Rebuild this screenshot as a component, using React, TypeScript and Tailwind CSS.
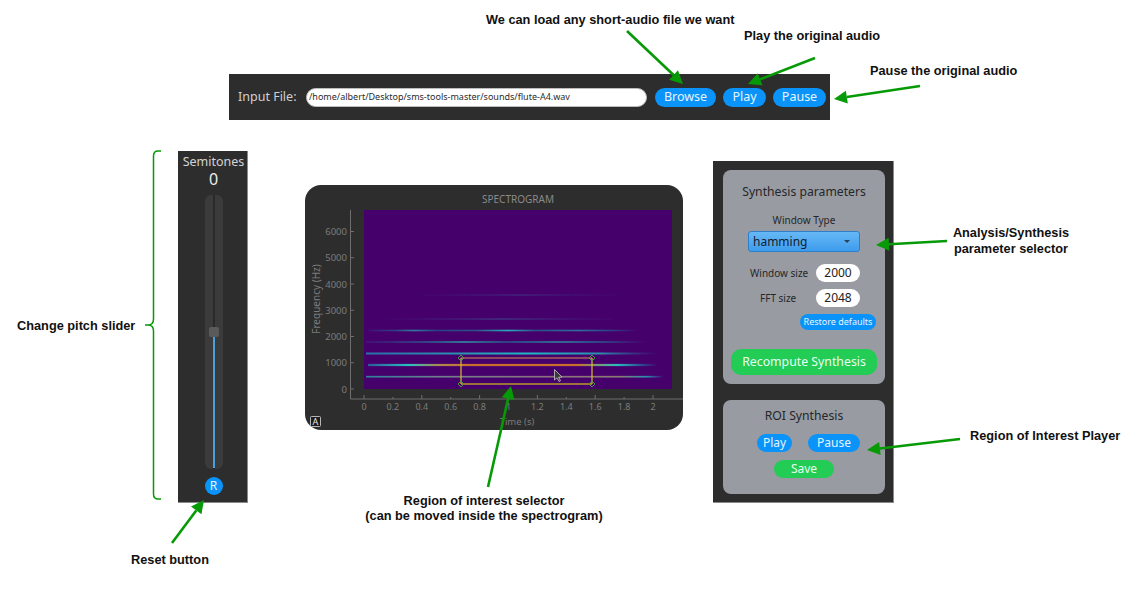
import React from 'react';

const uiFont = "font-['Noto_Sans',sans-serif]";

const arrows = [
  { x1: 627, y1: 31, x2: 683, y2: 84 },
  { x1: 815, y1: 58, x2: 748, y2: 84 },
  { x1: 920, y1: 86, x2: 834, y2: 99 },
  { x1: 947, y1: 241, x2: 876, y2: 245 },
  { x1: 960, y1: 439, x2: 867, y2: 450 },
  { x1: 488, y1: 487, x2: 511, y2: 386 },
  { x1: 172, y1: 543, x2: 204, y2: 500 },
];

// harmonics of the flute note: y position, x range and a gradient
const harmonics = [
  { y: 295, x: 400, w: 240, h: 0.7, fill: 'url(#hFaint)' },
  { y: 319, x: 372, w: 260, h: 1, fill: 'url(#hFaint)' },
  { y: 330.5, x: 368, w: 270, h: 1.6, fill: 'url(#hMid)' },
  { y: 342, x: 366, w: 280, h: 1.6, fill: 'url(#hMid2)' },
  { y: 353.5, x: 366, w: 292, h: 2, fill: 'url(#hBright)' },
  { y: 365, x: 368, w: 290, h: 2.2, fill: 'url(#hHot)' },
  { y: 376.7, x: 366, w: 298, h: 1.7, fill: 'url(#hLow)' },
];

const Arrow = ({ x1, y1, x2, y2 }: { x1: number; y1: number; x2: number; y2: number }) => {
  const a = Math.atan2(y2 - y1, x2 - x1);
  const len = 13;
  const wing = 6.5;
  const bx = x2 - len * Math.cos(a);
  const by = y2 - len * Math.sin(a);
  const px = -Math.sin(a) * wing;
  const py = Math.cos(a) * wing;
  return (
    <g>
      <line x1={x1} y1={y1} x2={bx} y2={by} stroke="#079a07" strokeWidth={2.6} />
      <polygon points={`${x2},${y2} ${bx + px},${by + py} ${bx - px},${by - py}`} fill="#079a07" />
    </g>
  );
};

const Overlay = () => (
  <svg className="absolute left-0 top-0 z-10 pointer-events-none" width={1139} height={595}>
    {arrows.map((a, i) => (
      <Arrow key={i} {...a} />
    ))}
    <path
      d="M161 151 H158 Q153.5 151 153.5 156 V319 Q153.5 325 148 325 H145 M148 325 Q153.5 325 153.5 331 V494 Q153.5 499 158 499 H161"
      fill="none"
      stroke="#079a07"
      strokeWidth={1.5}
    />
  </svg>
);

const Spectrogram = () => {
  const xTicks = ['0', '0.2', '0.4', '0.6', '0.8', '1', '1.2', '1.4', '1.6', '1.8', '2'];
  const yTicks = ['0', '1000', '2000', '3000', '4000', '5000', '6000'];
  return (
    <div className={`absolute left-[305px] top-[185px] h-[245px] w-[378px] overflow-hidden rounded-[16px] bg-[#2d2d2d] ${uiFont}`}>
      <svg width={378} height={245} viewBox="305 185 378 245">
        <defs>
          <filter id="soft" x="-5%" y="-300%" width="110%" height="700%">
            <feGaussianBlur stdDeviation="0.5" />
          </filter>
          <linearGradient id="hFaint">
            <stop offset="0" stopColor="#3f2a80" stopOpacity={0} />
            <stop offset="0.5" stopColor="#3a4a8c" />
            <stop offset="1" stopColor="#3f2a80" stopOpacity={0} />
          </linearGradient>
          <linearGradient id="hMid">
            <stop offset="0" stopColor="#31488e" stopOpacity={0.2} />
            <stop offset="0.1" stopColor="#2b3f85" />
            <stop offset="0.17" stopColor="#2f7f9e" />
            <stop offset="0.25" stopColor="#2b3f85" />
            <stop offset="0.4" stopColor="#2b4f8a" />
            <stop offset="0.52" stopColor="#26b0b8" />
            <stop offset="0.62" stopColor="#2b4f8a" />
            <stop offset="0.78" stopColor="#2f6f9e" />
            <stop offset="0.9" stopColor="#2b3f85" />
            <stop offset="1" stopColor="#31488e" stopOpacity={0} />
          </linearGradient>
          <linearGradient id="hMid2">
            <stop offset="0" stopColor="#31488e" stopOpacity={0.3} />
            <stop offset="0.25" stopColor="#2b5f90" />
            <stop offset="0.35" stopColor="#2f8fa0" />
            <stop offset="0.5" stopColor="#2b4f8a" />
            <stop offset="0.7" stopColor="#2f7f9e" />
            <stop offset="0.85" stopColor="#2b4f8a" />
            <stop offset="1" stopColor="#31488e" stopOpacity={0} />
          </linearGradient>
          <linearGradient id="hBright">
            <stop offset="0" stopColor="#2a6fa8" />
            <stop offset="0.3" stopColor="#2a8fae" />
            <stop offset="0.55" stopColor="#22b8c4" />
            <stop offset="0.8" stopColor="#2a8fae" />
            <stop offset="1" stopColor="#2a5f98" stopOpacity={0} />
          </linearGradient>
          <linearGradient id="hHot">
            <stop offset="0" stopColor="#2a5c9a" />
            <stop offset="0.14" stopColor="#28c0c0" />
            <stop offset="0.24" stopColor="#a88a50" />
            <stop offset="0.35" stopColor="#c8702a" />
            <stop offset="0.72" stopColor="#c8702a" />
            <stop offset="0.86" stopColor="#28c0c0" />
            <stop offset="0.93" stopColor="#2a5c9a" />
            <stop offset="1" stopColor="#2a5c9a" stopOpacity={0} />
          </linearGradient>
          <linearGradient id="hLow">
            <stop offset="0" stopColor="#2f7f9a" />
            <stop offset="0.25" stopColor="#6f7f8a" />
            <stop offset="0.6" stopColor="#8a7080" />
            <stop offset="0.85" stopColor="#8a7a70" />
            <stop offset="0.94" stopColor="#2890b0" />
            <stop offset="1" stopColor="#28a0b0" stopOpacity={0} />
          </linearGradient>
        </defs>
        <rect x={364} y={210} width={308} height={179} fill="#46006c" />
        <g filter="url(#soft)">
          {harmonics.map((h) => (
            <rect key={h.y} x={h.x} y={h.y - h.h / 2} width={h.w} height={h.h} fill={h.fill} />
          ))}
        </g>

        <path d="M350.5 210 V399 H683" fill="none" stroke="#6f6f6f" strokeWidth={1} />
        {xTicks.map((t, i) => (
          <g key={t}>
            <line x1={364 + i * 28.9} x2={364 + i * 28.9} y1={399} y2={i % 2 === 0 ? 395 : 397} stroke="#6f6f6f" />
            <text x={364 + i * 28.9} y={410} textAnchor="middle" fontSize={9} fill="#7c7c7c">
              {t}
            </text>
          </g>
        ))}
        {yTicks.map((t, i) => (
          <g key={t}>
            <line x1={350} x2={354} y1={389 - i * 26.25} y2={389 - i * 26.25} stroke="#6f6f6f" />
            <text x={347} y={392.5 - i * 26.25} textAnchor="end" fontSize={9.5} fill="#7c7c7c">
              {t}
            </text>
          </g>
        ))}
        <text
          transform="rotate(-90 320 299)"
          x={320}
          y={299}
          textAnchor="middle"
          fontSize={10}
          fill="#7c7c7c"
        >
          Frequency (Hz)
        </text>
        <text x={517} y={425} textAnchor="middle" fontSize={9.5} fill="#7c7c7c">
          Time (s)
        </text>
        <text x={518} y={203} textAnchor="middle" fontSize={10} fill="#8a8a8a">
          SPECTROGRAM
        </text>

        {/* region of interest */}
        <line x1={461} x2={592} y1={358} y2={358} stroke="#a4605e" strokeWidth={1.4} />
        <line x1={461} x2={592} y1={384} y2={384} stroke="#b59a2a" strokeWidth={1.4} />
        <line x1={461} x2={461} y1={358} y2={384} stroke="#d8c02e" strokeWidth={1.2} />
        <line x1={592} x2={592} y1={358} y2={384} stroke="#d8c02e" strokeWidth={1.2} />
        {[
          [461, 358],
          [592, 358],
          [461, 384],
          [592, 384],
        ].map(([x, y]) => (
          <path
            key={`${x}-${y}`}
            d={`M${x} ${y - 3} L${x + 3} ${y} L${x} ${y + 3} L${x - 3} ${y} Z`}
            fill="none"
            stroke="#3f9a4a"
            strokeWidth={1}
          />
        ))}

        {/* mouse pointer */}
        <path d="M554.5 369.5 V380 L557 377.8 L559 381.5 L560.5 380.7 L558.7 377.2 L562 377 Z" fill="#3a3a3a" stroke="#c8c8c8" strokeWidth={0.8} />

        {/* toolbar badge */}
        <rect x={310.5} y={416.5} width={10} height={10} rx={1} fill="#1c1c1c" stroke="#c8c8c8" strokeWidth={0.9} />
        <text x={315.5} y={425} textAnchor="middle" fontSize={9} fill="#e8e8e8">
          A
        </text>
      </svg>
    </div>
  );
};

const pill = 'flex items-center justify-center rounded-full bg-[#0a93f9] text-[#e6f3ff]';

export default function App() {
  return (
    <div className="relative h-[595px] w-[1139px] overflow-hidden bg-white">
      {/* input bar */}
      <div className={`absolute left-[229px] top-[74px] flex h-[46px] w-[601px] items-center bg-[#2d2d2d] pl-[9px] pr-1 ${uiFont}`}>
        <span className="w-[68px] text-[12.5px] text-[#d0d0d0]">Input File:</span>
        <div className="flex h-[19px] w-[341px] items-center overflow-hidden rounded-full border border-[#bdbdbd] bg-white pl-[2px] text-[9px] text-[#2b2b2b]">
          /home/albert/Desktop/sms-tools-master/sounds/flute-A4.wav
        </div>
        <button className={`${pill} ml-2 h-[19px] w-[61px] text-[12.5px]`}>Browse</button>
        <button className={`${pill} ml-[7px] h-[19px] w-[43px] text-[12.5px]`}>Play</button>
        <button className={`${pill} ml-[7px] h-[19px] w-[53px] text-[12.5px]`}>Pause</button>
      </div>

      {/* pitch slider */}
      <div className={`absolute left-[178px] top-[151px] flex h-[352px] w-[70px] flex-col items-center border-b border-r border-[#8a8a8a] bg-[#2d2d2d] pl-[2px] ${uiFont}`}>
        <div className="mt-[2px] text-[12.5px] leading-[17px] text-[#d4d4d4]">Semitones</div>
        <div className="-mt-[1px] text-[16px] leading-[21px] text-[#ececec]">0</div>
        <div className="relative mt-[5px] flex h-[274px] w-[18px] justify-center rounded-md bg-[#3b3b3b]">
          <div className="h-full w-[2px] bg-[#2a2a2a]" />
          <div className="absolute bottom-[1px] left-[8px] h-[131px] w-[2px] bg-[#4a9fdc]" />
          <div className="absolute left-[4px] top-[132px] h-[10px] w-[10px] rounded-[2px] bg-[#5a5a5a]" />
        </div>
        <button className={`${pill} mt-2 h-[18px] w-[18px] text-[12px]`}>R</button>
      </div>

      <Spectrogram />

      {/* synthesis panels */}
      <div className={`absolute left-[713px] top-[161px] flex h-[342px] w-[181px] flex-col gap-4 border-b border-r border-[#8a8a8a] bg-[#2d2d2d] pl-[10px] pr-2 pt-[9px] ${uiFont}`}>
        <div className="flex h-[214px] w-[162px] flex-col items-center rounded-lg bg-[#989ba1] pt-[13px] text-[#25272b]">
          <div className="text-[12.2px] leading-[17px]">Synthesis parameters</div>
          <div className="mt-[13px] text-[10px] leading-[14px]">Window Type</div>
          <div className="mt-[4px] flex h-[21px] w-[112px] items-center justify-between rounded-[3px] border border-[#2f7fc8] bg-gradient-to-b from-[#66b8f6] to-[#3d9cec] pl-1 pr-[9px] text-[12px] text-[#14202c]">
            hamming
            <span className="h-0 w-0 border-x-[3.5px] border-t-[3.5px] border-x-transparent border-t-[#27425c]" />
          </div>
          <div className="mt-[12px] flex w-full items-center pl-[27px]">
            <span className="w-[66px] text-[10px]">Window size</span>
            <span className="flex h-[18px] w-[44px] items-center justify-center rounded-full bg-white text-[12px] text-[#222]">2000</span>
          </div>
          <div className="mt-[7px] flex w-full items-center pl-[37px]">
            <span className="w-[56px] text-[10px]">FFT size</span>
            <span className="flex h-[18px] w-[44px] items-center justify-center rounded-full bg-white text-[12px] text-[#222]">2048</span>
          </div>
          <div className="mt-[7px] flex w-full justify-end pr-[9px]">
            <button className={`${pill} h-[16px] w-[76px] text-[9px]`}>Restore defaults</button>
          </div>
          <button className="mt-[19px] flex h-[26px] w-[146px] items-center justify-center rounded-[10px] bg-[#22cc55] text-[12.3px] text-[#e8fff0]">
            Recompute Synthesis
          </button>
        </div>
        <div className="flex h-[94px] w-[162px] flex-col items-center rounded-lg bg-[#989ba1] pt-[7px] text-[#25272b]">
          <div className="text-[12.2px] leading-[17px]">ROI Synthesis</div>
          <div className="ml-[9px] mt-[10px] flex w-[103px] justify-between">
            <button className={`${pill} h-[18px] w-[35px] text-[12px]`}>Play</button>
            <button className={`${pill} h-[18px] w-[52px] text-[12px]`}>Pause</button>
          </div>
          <button className="mt-[8px] flex h-[18px] w-[60px] items-center justify-center rounded-full bg-[#22cc55] text-[12px] text-[#e8fff0]">
            Save
          </button>
        </div>
      </div>

      {/* annotations */}
      <div className="font-['Liberation_Sans',sans-serif] text-[12.75px] font-bold leading-[15px] text-[#111]">
        <div className="absolute left-[486px] top-[12px]">We can load any short-audio file we want</div>
        <div className="absolute left-[744px] top-[28px]">Play the original audio</div>
        <div className="absolute left-[870px] top-[63px]">Pause the original audio</div>
        <div className="absolute left-[17px] top-[318px]">Change pitch slider</div>
        <div className="absolute left-[131px] top-[552px]">Reset button</div>
        <div className="absolute left-[334px] top-[493px] w-[300px] text-center">
          Region of interest selector
          <br />
          (can be moved inside the spectrogram)
        </div>
        <div className="absolute left-[931px] top-[225px] w-[160px] text-center leading-[16px]">
          Analysis/Synthesis
          <br />
          parameter selector
        </div>
        <div className="absolute left-[970px] top-[428px]">Region of Interest Player</div>
      </div>

      <Overlay />
    </div>
  );
}
